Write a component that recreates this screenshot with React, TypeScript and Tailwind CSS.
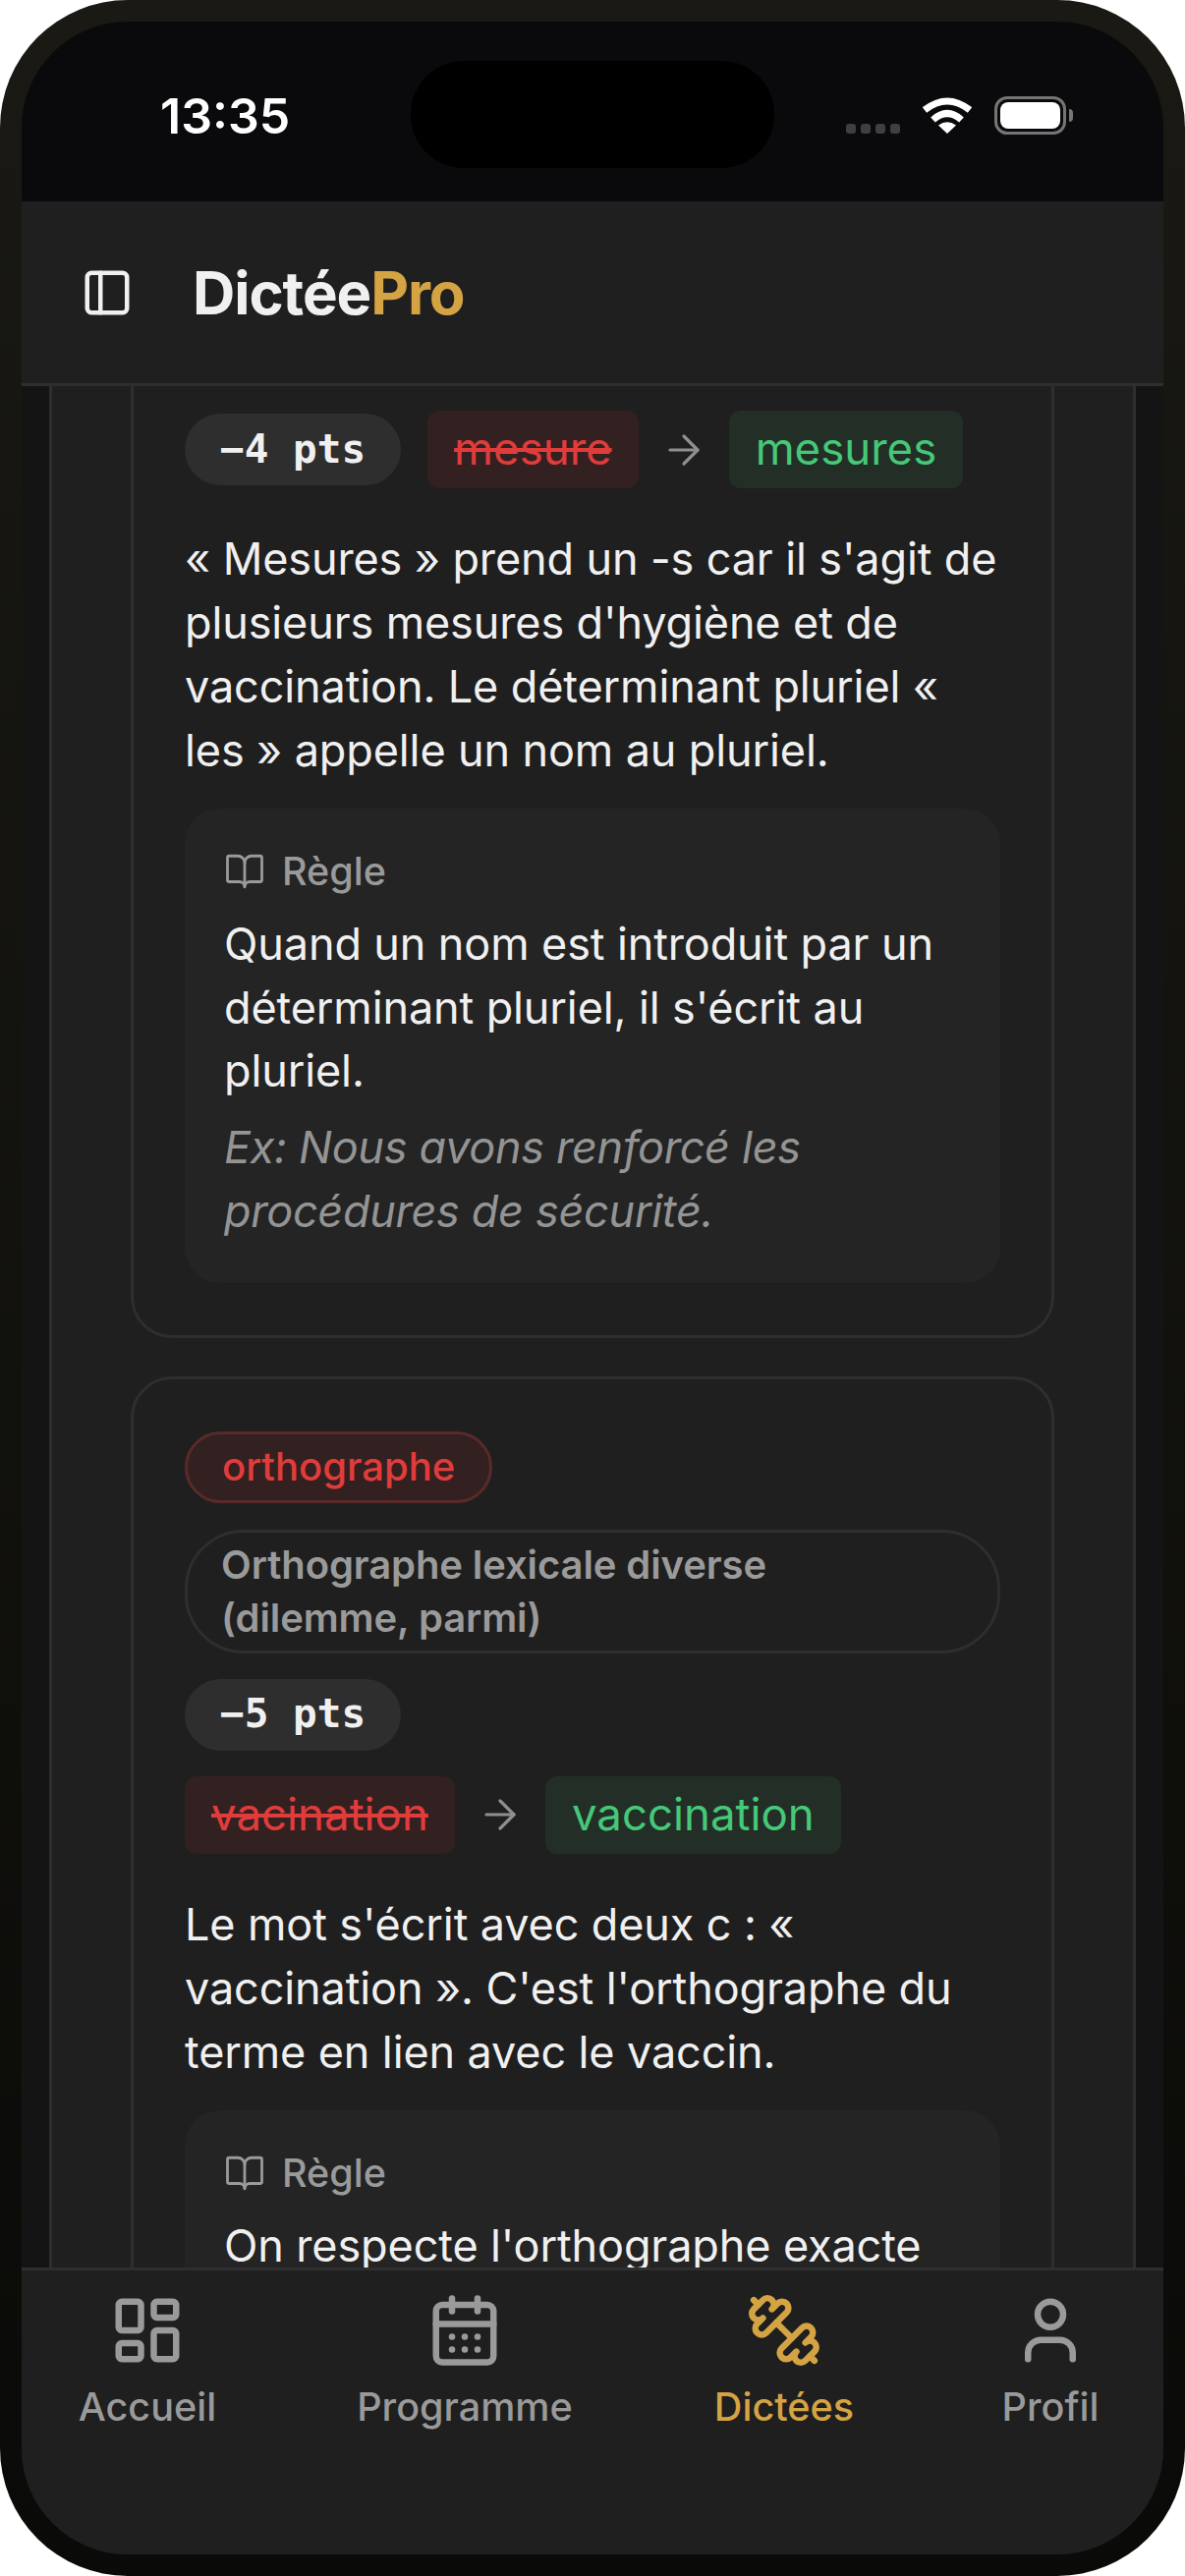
import { ArrowRight, BookOpen, CalendarDays, LayoutDashboard, PanelLeft, User } from "lucide-react";
import type { SVGProps } from "react";

function DumbbellIcon(props: SVGProps<SVGSVGElement>) {
  return (
    <svg viewBox="0 0 24 24" fill="none" stroke="currentColor" strokeWidth={2} strokeLinecap="round" strokeLinejoin="round" {...props}>
      <path d="M14.4 14.4 9.6 9.6" />
      <path d="M18.657 21.485a2 2 0 1 1-2.829-2.828l-1.767 1.768a2 2 0 1 1-2.829-2.829l6.364-6.364a2 2 0 1 1 2.829 2.829l-1.768 1.767a2 2 0 1 1 2.828 2.829z" />
      <path d="m21.5 21.5-1.4-1.4" />
      <path d="M3.9 3.9 2.5 2.5" />
      <path d="M6.404 12.768a2 2 0 1 1-2.829-2.829l1.768-1.767a2 2 0 1 1-2.828-2.829l2.828-2.828a2 2 0 1 1 2.829 2.828l1.767-1.768a2 2 0 1 1 2.829 2.829z" />
    </svg>
  );
}

const cards = [
  {
    pts: "−4 pts",
    wrong: "mesure",
    right: "mesures",
    text: ["« Mesures » prend un -s car il s'agit de", "plusieurs mesures d'hygiène et de", "vaccination. Le déterminant pluriel «", "les » appelle un nom au pluriel."],
    rule: ["Quand un nom est introduit par un", "déterminant pluriel, il s'écrit au", "pluriel."],
    example: ["Ex: Nous avons renforcé les", "procédures de sécurité."],
  },
  {
    tag: "orthographe",
    category: ["Orthographe lexicale diverse", "(dilemme, parmi)"],
    pts: "−5 pts",
    wrong: "vacination",
    right: "vaccination",
    text: ["Le mot s'écrit avec deux c : «", "vaccination ». C'est l'orthographe du", "terme en lien avec le vaccin."],
    rule: ["On respecte l'orthographe exacte", "des mots courants."],
    example: [],
  },
];

const navItems = [
  { label: "Accueil", Icon: LayoutDashboard, active: false, width: "w-[256px]" },
  { label: "Programme", Icon: CalendarDays, active: false, width: "w-[390px]" },
  { label: "Dictées", Icon: DumbbellIcon, active: true, width: "w-[260px]" },
  { label: "Profil", Icon: User, active: false, width: "ml-[26px] w-[230px]" },
];

function WordChips({ pts, wrong, right, inline }: { pts: string; wrong: string; right: string; inline: boolean }) {
  const chips = (
    <div className="flex items-center">
      <span className="flex h-[79px] items-center rounded-[12px] bg-[#332020] px-[27px] text-[45.6px] text-[#e03c3c] line-through">{wrong}</span>
      <ArrowRight className="mx-[22px] h-[48px] w-[48px] text-[#8f8f8f]" strokeWidth={1.6} />
      <span className="flex h-[79px] items-center rounded-[12px] bg-[#232e27] px-[27px] text-[45.6px] text-[#45c878]">{right}</span>
    </div>
  );
  const pill = (
    <span className="flex h-[73px] items-center rounded-full bg-[#2e2e2e] px-[36px] font-['DejaVu_Sans_Mono',monospace] text-[41px] font-bold text-[#f0f0f0]">
      {pts}
    </span>
  );
  if (inline) {
    return (
      <div className="flex items-center gap-[27px]">
        {pill}
        {chips}
      </div>
    );
  }
  return (
    <div className="flex flex-col items-start gap-[26px]">
      {pill}
      {chips}
    </div>
  );
}

export default function App() {
  return (
    <div className="h-[2622px] w-[1206px] overflow-hidden bg-white font-['Inter',sans-serif]">
      <div className="h-full w-full rounded-[130px] bg-gradient-to-b from-[#1a1914] to-[#0a0a08] p-[22px]">
        <div className="flex h-full flex-col overflow-hidden rounded-[108px] bg-[#1f1f1f]">
          <div className="relative flex h-[183px] shrink-0 bg-[#0a0a0c]">
            <span className="absolute left-[141px] top-[63px] text-[50px] font-semibold leading-[66px] text-white">13:35</span>
            <div className="absolute left-[396px] top-[40px] h-[109px] w-[370px] rounded-[54px] bg-black" />
            <div className="absolute left-[839px] top-[104px] flex gap-[5px]">
              <span className="h-[10px] w-[10px] rounded-[3px] bg-[#3f3f3f]" />
              <span className="h-[10px] w-[10px] rounded-[3px] bg-[#3f3f3f]" />
              <span className="h-[10px] w-[10px] rounded-[3px] bg-[#3f3f3f]" />
              <span className="h-[10px] w-[10px] rounded-[3px] bg-[#3f3f3f]" />
            </div>
            <svg className="absolute left-[917px] top-[77px]" width="50" height="37" viewBox="0 0 50 37" fill="none">
              <path d="M2 13 Q25 -5 48 13" stroke="#fff" strokeWidth="7" />
              <path d="M10.5 23 Q25 10 39.5 23" stroke="#fff" strokeWidth="7" />
              <path d="M25 37 L16 28.5 Q25 22 34 28.5 Z" fill="#fff" />
            </svg>
            <div className="absolute left-[990px] top-[76px] flex h-[39px] w-[73px] items-center justify-center rounded-[13px] border-[3px] border-[#757575]">
              <div className="h-[27px] w-[61px] rounded-[8px] bg-white" />
            </div>
            <div className="absolute left-[1066px] top-[89px] h-[13px] w-[4px] rounded-r-full bg-[#757575]" />
          </div>

          <header className="flex h-[188px] shrink-0 items-center border-b-[3px] border-[#2e2e2e] bg-[#1f1f1f] pl-[60px]">
            <PanelLeft className="h-[54px] w-[54px] text-[#f0f0f0]" strokeWidth={2} />
            <h1 className="ml-[60px] text-[60px] font-bold tracking-[-1.1px] text-[#f0f0f0]">
              Dictée<span className="text-[#d4a343]">Pro</span>
            </h1>
          </header>

          <main className="min-h-0 flex-1 overflow-hidden bg-[#141414] px-[28px]">
            <div className="-mt-[60px] border-x-[3px] border-[#2e2e2e] bg-[#1f1f1f] px-[80px]">
              <div className="flex flex-col gap-[39px]">
                {cards.map((card, i) => (
                  <article key={card.wrong} className={`rounded-[42px] border-[3px] border-[#2e2e2e] px-[52px] pb-[53px] ${i === 0 ? "pt-[82px]" : "pt-[53px]"}`}>
                    {card.tag && (
                      <div className="mb-[26px] flex flex-col items-start gap-[27px]">
                        <span className="flex h-[73px] items-center rounded-full border-[3px] border-[#5a2a2a] bg-[#332020] px-[35px] text-[40px] font-medium text-[#e03c3c]">
                          {card.tag}
                        </span>
                        <span className="w-full rounded-[60px] border-[3px] border-[#2e2e2e] px-[34px] py-[6px] text-[40px] font-semibold leading-[54px] tracking-[-0.1px] text-[#9a9a9a]">
                          {card.category?.map((line) => (
                            <span key={line} className="block">{line}</span>
                          ))}
                        </span>
                      </div>
                    )}
                    <WordChips pts={card.pts} wrong={card.wrong} right={card.right} inline={!card.tag} />
                    <p className="mt-[39px] text-[45px] leading-[65px] tracking-[-0.12px] text-[#f0f0f0]">
                      {card.text.map((line) => (
                        <span key={line} className="block whitespace-nowrap">{line}</span>
                      ))}
                    </p>
                    <section className="mt-[27px] rounded-[36px] bg-[#242424] px-[40px] pb-[41px] pt-[40px]">
                      <div className="flex items-center gap-[17px] text-[39.5px] font-medium leading-[48px] text-[#9a9a9a]">
                        <BookOpen className="h-[42px] w-[42px]" strokeWidth={1.6} />
                        Règle
                      </div>
                      <p className="mt-[18px] text-[45px] leading-[64.5px] tracking-[-0.12px] text-[#f0f0f0]">
                        {card.rule.map((line) => (
                          <span key={line} className="block whitespace-nowrap">{line}</span>
                        ))}
                      </p>
                      {card.example.length > 0 && (
                        <p className="mt-[12px] text-[45px] italic leading-[65px] tracking-[-0.3px] text-[#949494]">
                          {card.example.map((line) => (
                            <span key={line} className="block whitespace-nowrap">{line}</span>
                          ))}
                        </p>
                      )}
                    </section>
                  </article>
                ))}
              </div>
            </div>
          </main>

          <nav className="flex h-[292px] shrink-0 items-start border-t-[3px] border-[#2e2e2e] bg-[#1f1f1f] pt-[22px]">
            {navItems.map(({ label, Icon, active, width }) => (
              <div key={label} className={`flex flex-col items-center ${width} ${active ? "text-[#d4a343]" : "text-[#9a9a9a]"}`}>
                <Icon className="h-[78px] w-[78px]" strokeWidth={2} />
                <span className="mt-[12px] text-[39.6px] font-medium leading-[54px]">{label}</span>
              </div>
            ))}
          </nav>
        </div>
      </div>
    </div>
  );
}
